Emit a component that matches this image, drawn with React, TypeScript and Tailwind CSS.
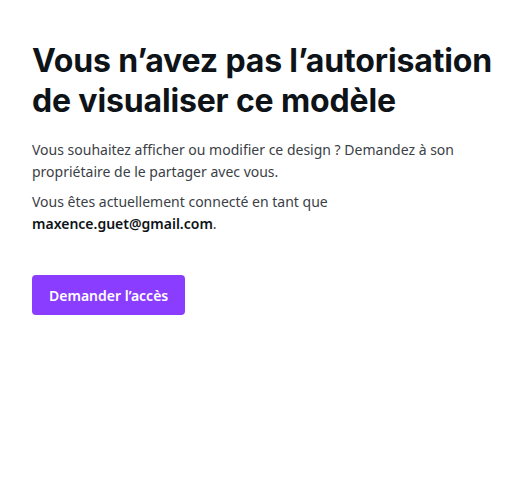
export default function App() {
  return (
    <div className="min-h-screen w-full bg-white px-8 pt-[41px]" style={{ fontFamily: '"Noto Sans", sans-serif' }}>
      <h1
        className="text-[32px] font-bold leading-[40px] tracking-[-0.15px] text-[#0e1318]"
        style={{ fontFamily: 'Inter, "Noto Sans", sans-serif' }}
      >
        Vous n’avez pas l’autorisation de visualiser ce modèle
      </h1>
      <p className="mt-[18px] text-[14px] leading-[22px] text-[#3b4046]">
        Vous souhaitez afficher ou modifier ce design ? Demandez à son propriétaire de le partager avec vous.
      </p>
      <p className="mt-[8px] text-[14px] leading-[22px] text-[#3b4046]">
        Vous êtes actuellement connecté en tant que{' '}
        <span className="font-semibold text-[#0e1318]">maxence.guet@gmail.com</span>.
      </p>
      <button className="mt-[40px] h-10 rounded-[4px] bg-[#8b3dff] px-[17px] text-[14px] font-semibold text-white">
        Demander l’accès
      </button>
    </div>
  )
}
